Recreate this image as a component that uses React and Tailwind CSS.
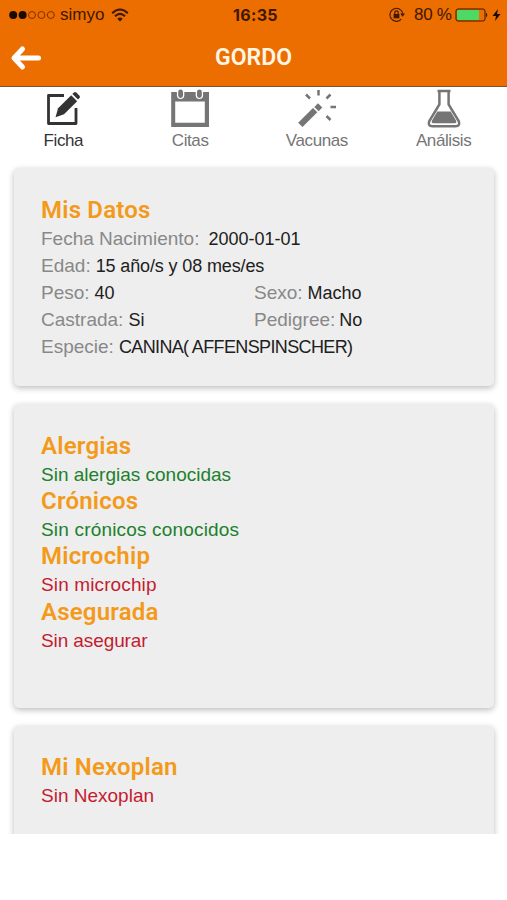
const tabs = [
  { name: "Ficha", icon: EditIcon, active: true },
  { name: "Citas", icon: CalendarIcon },
  { name: "Vacunas", icon: WandIcon },
  { name: "Análisis", icon: FlaskIcon },
];

const health = [
  { title: "Alergias", text: "Sin alergias conocidas", color: "text-[#20802c]", spacing: "tracking-normal" },
  { title: "Crónicos", text: "Sin crónicos conocidos", color: "text-[#20802c]", spacing: "tracking-[0.18px]" },
  { title: "Microchip", text: "Sin microchip", color: "text-[#c41c30]", spacing: "tracking-[0.12px]" },
  { title: "Asegurada", text: "Sin asegurar", color: "text-[#c41c30]", spacing: "tracking-[-0.1px]" },
];

function EditIcon() {
  return (
    <svg width="40" height="40" viewBox="0 0 40 40">
      <path d="M21 7.500H5.500V35.500H33V20" fill="none" stroke="currentColor" strokeWidth="2.800" strokeLinejoin="round" />
      <path d="M12.500 29.200l2.600-9L28.200 7.200l6 6L21 26.300z" fill="currentColor" />
      <path d="M29.400 6l1.500-1.500q1.200-1 2.400 0l3.200 3.200q1 1.200 0 2.400L35 11.600z" fill="currentColor" />
    </svg>
  );
}

function CalendarIcon() {
  return (
    <svg width="40" height="40" viewBox="0 0 40 40">
      <path fillRule="evenodd" d="M1.200 4h37.800V39H1.200zM5.200 13.500v21.300h29.600V13.500z" fill="currentColor" />
      <rect x="6.900" y="0.500" width="7.400" height="10.500" rx="3.700" fill="white" />
      <rect x="8.200" y="1.500" width="4.800" height="8.500" rx="2.400" fill="currentColor" />
      <rect x="25.700" y="0.500" width="7.400" height="10.500" rx="3.700" fill="white" />
      <rect x="27" y="1.500" width="4.800" height="8.500" rx="2.400" fill="currentColor" />
    </svg>
  );
}

function WandIcon() {
  return (
    <svg width="40" height="40" viewBox="0 0 40 40">
      <path d="M1.200 34.700L16 20l4.300 4.300L5.500 39zM17.300 18.900l3.700-3.600 4.300 4.300-3.700 3.600z" fill="currentColor" />
      <path d="M21.500 2v5.500M9 6.500l4 4M33.500 6.500l-4 4M33.500 19h5.500M29.500 28l4 4" stroke="currentColor" strokeWidth="2.500" />
    </svg>
  );
}

function FlaskIcon() {
  return (
    <svg width="40" height="40" viewBox="0 0 40 40">
      <path d="M13.500 3h13M15.400 3v13.500L5.300 33Q3.300 38 8.500 38.200h23q5.200-.2 3.200-5.200L24.600 16.500V3" fill="none" stroke="currentColor" strokeWidth="2.500" />
      <path d="M13.300 23.500h13.400l5.300 9q1 2.500-1.200 2.700H9.200q-2.200-.2-1.200-2.700z" fill="currentColor" />
    </svg>
  );
}

function StatusBar() {
  return (
    <div className="flex h-[29px] items-center pr-1.5 pl-2 text-[#3d1700]">
      <div className="flex w-[225px] items-center">
        <svg width="48" height="10" viewBox="0 0 48 10" className="mr-1">
          <circle cx="5.200" cy="5" r="4" fill="#190b00" />
          <circle cx="14.600" cy="5" r="4" fill="#190b00" />
          <g fill="none" stroke="#7c3000" strokeWidth="1">
            <circle cx="24" cy="5" r="3.500" />
            <circle cx="33.400" cy="5" r="3.500" />
            <circle cx="42.800" cy="5" r="3.500" />
          </g>
        </svg>
        <span className="w-[51px] text-[17px] leading-none">simyo</span>
        <svg width="18" height="14" viewBox="0 0 18 14">
          <g fill="none" stroke="currentColor" strokeWidth="2">
            <path d="M1.200 5.200q7.800-7.500 15.600 0" />
            <path d="M4 8.200q5-4.600 10 0" />
          </g>
          <path d="M6.300 10.700q2.700-2.300 5.400 0L9 13.500z" fill="currentColor" />
        </svg>
      </div>
      <span className="w-[156px] font-[Inter] text-[16px] leading-none font-bold tracking-[0.35px]">16:35</span>
      <svg width="16" height="16" viewBox="0 0 16 16">
        <path d="M13.800 6.300A6.500 6.500 0 1 0 12.300 12.200" fill="none" stroke="currentColor" strokeWidth="1.100" />
        <path d="M11.200 6.500H16l-2.400 3.200z" fill="currentColor" />
        <path d="M4.600 7h5.800v4.300H4.600z" fill="currentColor" />
        <path d="M5.800 7V5.600a1.700 1.700 0 0 1 3.400 0V7" fill="none" stroke="currentColor" strokeWidth="1.200" />
      </svg>
      <span className="ml-[9px] w-[41px] text-[17px] leading-none tracking-[-0.3px] whitespace-nowrap">80 %</span>
      <svg width="34" height="14" viewBox="0 0 34 14">
        <rect x="1" y="1" width="29" height="12" rx="2" fill="none" stroke="currentColor" strokeWidth="1" />
        <rect x="2" y="2" width="22" height="10" rx="1" fill="#4cd964" />
        <path d="M31 4.500q2.500 2.500 0 5z" fill="currentColor" />
      </svg>
      <svg width="9" height="12" viewBox="0 0 9 12" className="ml-[3px]">
        <path d="M6 0L0.500 7H4L3 12 8.500 5H5z" fill="#190b00" />
      </svg>
    </div>
  );
}

function Card({ children, className }) {
  return (
    <section className={`rounded-[5px] bg-[#eeeeee] px-[27px] shadow-[0_2px_6px_rgba(0,0,0,0.27)] ${className}`}>
      {children}
    </section>
  );
}

function Title({ children }) {
  return (
    <h2 className="h-[30px] font-[Roboto] text-[24px] leading-7 font-semibold tracking-[0.2px] whitespace-nowrap text-[#f39a1b]">
      {children}
    </h2>
  );
}

function Field({ label, value, gap = "ml-[5px]", spacing = "tracking-normal" }) {
  return (
    <p className="flex h-[27px] leading-[27px] whitespace-nowrap">
      <span className="text-[19px] leading-[25px] text-[#888888]">{label}:</span>
      <span className={`text-[#202020] ${gap} ${spacing}`}>{value}</span>
    </p>
  );
}

export default function App() {
  return (
    <div className="h-[900px] w-[507px] overflow-hidden bg-white font-['Liberation_Sans',sans-serif]">
      <header className="h-[87px] border-b border-[#80512d] bg-[#ed6e00]">
        <StatusBar />
        <div className="grid h-[57px] grid-cols-[80px_1fr_80px] items-center">
          <svg width="32" height="26" viewBox="0 0 32 26" className="ml-2.5">
            <path d="M12.500 4L4 13l8.500 9M4.500 13h24" fill="none" stroke="white" strokeWidth="5" strokeLinecap="round" strokeLinejoin="round" />
          </svg>
          <h1 className="text-center font-[Roboto] text-[23px] leading-none font-semibold text-[#fff6e6]">GORDO</h1>
        </div>
      </header>

      <main className="h-[747px] overflow-hidden">
        <nav className="grid h-[81px] grid-cols-4">
          {tabs.map((tab) => (
            <button
              key={tab.name}
              className={`flex flex-col items-center pt-px ${tab.active ? "text-[#333333]" : "text-[#757575]"}`}
            >
              <tab.icon />
              <span className="mt-px text-[17px] leading-[24px] tracking-[-0.4px]">{tab.name}</span>
            </button>
          ))}
        </nav>

        <div className="flex flex-col gap-[18px] pr-[13px] pl-[14px] text-[18px]">
          <Card className="h-[218px] pt-[28px]">
            <Title>Mis Datos</Title>
            <Field label="Fecha Nacimiento" value="2000-01-01" gap="ml-[9px]" />
            <Field label="Edad" value="15 año/s y 08 mes/es" spacing="tracking-[-0.13px]" />
            <div className="grid grid-cols-2">
              <Field label="Peso" value="40" />
              <Field label="Sexo" value="Macho" />
              <Field label="Castrada" value="Si" />
              <Field label="Pedigree" value="No" gap="ml-[4px]" />
            </div>
            <Field label="Especie" value="CANINA( AFFENSPINSCHER)" spacing="tracking-[-0.63px]" />
          </Card>

          <Card className="h-[304px] pt-[28px]">
            {health.map((item) => (
              <div key={item.title} className="h-[55.2px]">
                <Title>{item.title}</Title>
                <p className={`text-[19px] leading-[25px] ${item.color} ${item.spacing}`}>{item.text}</p>
              </div>
            ))}
          </Card>

          <Card className="h-[160px] pt-[27px]">
            <Title>Mi Nexoplan</Title>
            <p className="text-[19px] leading-[25px] text-[#c41c30]">Sin Nexoplan</p>
          </Card>
        </div>
      </main>
    </div>
  );
}
